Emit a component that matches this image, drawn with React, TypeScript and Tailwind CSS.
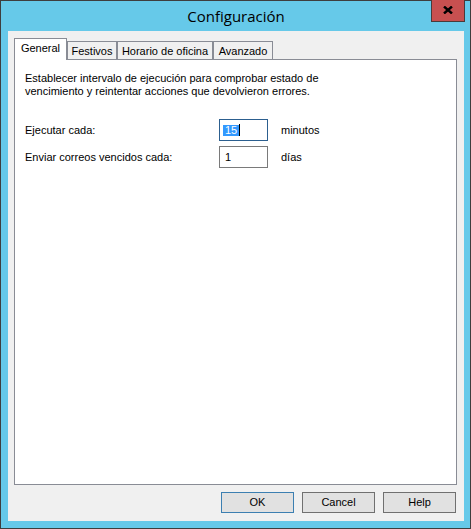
import React from "react";

const tabs = [
  { label: "General", width: "w-[53px]", active: true },
  { label: "Festivos", width: "w-[50px]", active: false },
  { label: "Horario de oficina", width: "w-[96px]", active: false },
  { label: "Avanzado", width: "w-[60px]", active: false },
];

const CloseGlyph: React.FC = () => (
  <svg width="10" height="8" viewBox="0 0 10 8" className="block">
    <path
      d="M1 0.5 L9 7.5 M9 0.5 L1 7.5"
      stroke="#000"
      strokeWidth="2.4"
      strokeLinecap="butt"
      fill="none"
    />
  </svg>
);

const DialogButton: React.FC<{ label: string; isDefault?: boolean }> = ({
  label,
  isDefault,
}) => (
  <button
    className={
      isDefault
        ? "w-[73px] h-[21px] bg-[#e1e1e1] border border-[#3c7fb1] text-black leading-[19px] text-center"
        : "w-[73px] h-[21px] bg-[#e1e1e1] border border-[#707070] text-black leading-[19px] text-center"
    }
  >
    {label}
  </button>
);

export default function App() {
  return (
    <div
      className="relative w-[471px] h-[529px] border border-[#3e3e3e] bg-[#66c9e9] flex flex-col pl-[7px] pr-[6px] pb-[7px] text-[11px] text-black"
      style={{ fontFamily: '"Liberation Sans", Arial, sans-serif' }}
    >
      {/* title bar */}
      <div className="h-[30px] flex items-center justify-center">
        <span
          className="text-[15px] leading-[20px] pb-[1px] text-[#000]"
          style={{ fontFamily: '"Open Sans", "Noto Sans", sans-serif' }}
        >
          Configuración
        </span>
      </div>
      <div className="absolute top-[-1px] right-[5px] w-[34px] h-[22px] bg-[#c75050] border border-[#4a3a3a] border-t-0 flex items-center justify-center pb-[2px]">
        <CloseGlyph />
      </div>

      {/* client area */}
      <div className="flex-1 bg-[#f0f0f0] flex flex-col pt-[7px] pl-[6px] pr-[7px]">
        {/* tab strip */}
        <div className="flex items-end h-[21px]">
          {tabs.map((t) =>
            t.active ? (
              <div
                key={t.label}
                className={`${t.width} h-[22px] -mb-px relative z-10 bg-white border border-b-0 border-[#898c95] flex items-center justify-center pb-[2px]`}
              >
                {t.label}
              </div>
            ) : (
              <div
                key={t.label}
                className={`${t.width} h-[18px] bg-[#f0f0f0] border border-b-0 border-[#898c95] flex items-center justify-center pt-[1px]`}
              >
                {t.label}
              </div>
            )
          )}
        </div>

        {/* tab panel */}
        <div className="flex-1 bg-white border border-[#898c95] pt-[10px] pl-[10px] flex flex-col">
          <p className="leading-[13px] pt-[2px]">
            Establecer intervalo de ejecución para comprobar estado de
            <br />
            vencimiento y reintentar acciones que devolvieron errores.
          </p>

          <div className="mt-[21px] flex flex-col gap-[5px]">
            <div className="flex items-center h-[22px]">
              <span className="w-[194px]">Ejecutar cada:</span>
              <div className="w-[49px] h-[22px] border border-[#2c5f8f] flex items-center pl-[3px]">
                <span className="bg-[#3399ff] text-white px-[2px] leading-[11px] h-[11px]">
                  15
                </span>
                <span className="w-px h-[12px] bg-black" />
              </div>
              <span className="ml-[13px]">minutos</span>
            </div>
            <div className="flex items-center h-[22px]">
              <span className="w-[194px]">Enviar correos vencidos cada:</span>
              <div className="w-[49px] h-[22px] border border-[#7a7a7a] flex items-center pl-[5px]">
                1
              </div>
              <span className="ml-[13px]">días</span>
            </div>
          </div>
        </div>

        {/* buttons */}
        <div className="h-[36px] flex justify-end items-start pt-[7px] gap-[8px] pr-px">
          <DialogButton label="OK" isDefault />
          <DialogButton label="Cancel" />
          <DialogButton label="Help" />
        </div>
      </div>
    </div>
  );
}
